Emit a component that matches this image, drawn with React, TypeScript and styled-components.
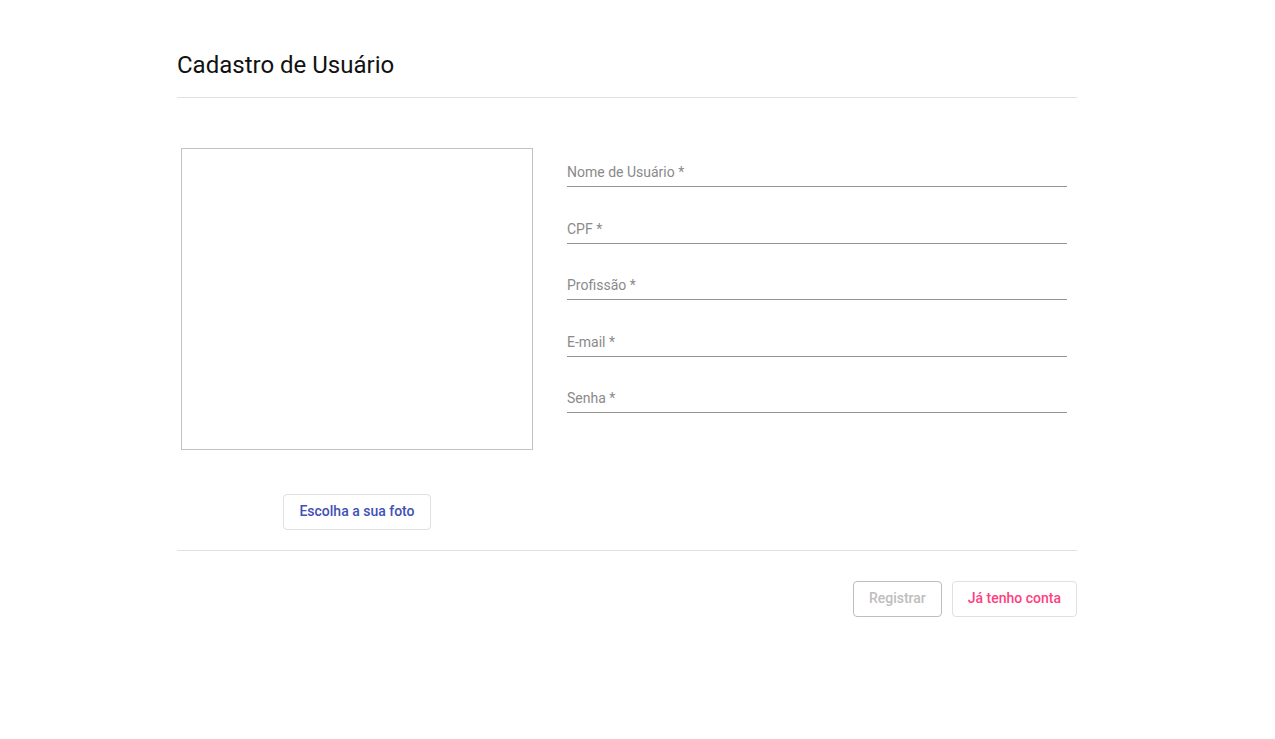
import React from "react";
import styled, { createGlobalStyle } from "styled-components";

const GlobalStyle = createGlobalStyle`
  body {
    margin: 0;
    background: #fff;
    font-family: Roboto, "Noto Sans", sans-serif;
  }
`;

const Page = styled.div`
  padding: 49px 0 0 177px;
`;

const Card = styled.div`
  width: 900px;
`;

const Header = styled.div`
  padding-bottom: 16px;
  border-bottom: 1px solid #e0e0e0;
  h1 {
    margin: 0;
    font-size: 24px;
    line-height: 32px;
    font-weight: 400;
    color: #111;
  }
`;

const Body = styled.div`
  display: flex;
  padding: 50px 0 20px;
  border-bottom: 1px solid #e0e0e0;
`;

const PhotoColumn = styled.div`
  width: 360px;
  display: flex;
  flex-direction: column;
  align-items: center;
  gap: 44px;
`;

const PhotoBox = styled.div`
  width: 350px;
  height: 300px;
  border: 1px solid #c2c2c2;
`;

const FieldsColumn = styled.div`
  margin-left: 30px;
  width: 500px;
  display: flex;
  flex-direction: column;
  gap: 17.5px;
`;

const Field = styled.label`
  display: block;
  padding: 14px 0 4px;
  border-bottom: 1px solid #949494;
  span {
    display: block;
    font-size: 14px;
    line-height: 20px;
    color: #8a8a8a;
  }
`;

const Button = styled.button<{ $tone: "primary" | "accent" | "disabled" }>`
  height: 36px;
  padding: 0 15px 2px;
  background: #fff;
  border-radius: 4px;
  font-family: Roboto, sans-serif;
  font-size: 14px;
  font-weight: 500;
  line-height: 20px;
  cursor: ${(p) => (p.$tone === "disabled" ? "default" : "pointer")};
  border: 1px solid ${(p) => (p.$tone === "disabled" ? "#bdbdbd" : "#e0e0e0")};
  color: ${(p) =>
    p.$tone === "primary" ? "#3f51b5" : p.$tone === "accent" ? "#ff4081" : "#bdbdbd"};
`;

const Actions = styled.div`
  display: flex;
  justify-content: flex-end;
  gap: 10px;
  padding-top: 30px;
`;

const fields = ["Nome de Usuário *", "CPF *", "Profissão *", "E-mail *", "Senha *"];

const App = () => {
  return (
    <>
      <GlobalStyle />
      <Page>
        <Card>
          <Header>
            <h1>Cadastro de Usuário</h1>
          </Header>
          <Body>
            <PhotoColumn>
              <PhotoBox />
              <Button $tone="primary">Escolha a sua foto</Button>
            </PhotoColumn>
            <FieldsColumn>
              {fields.map((label) => (
                <Field key={label}>
                  <span>{label}</span>
                </Field>
              ))}
            </FieldsColumn>
          </Body>
          <Actions>
            <Button $tone="disabled" disabled>
              Registrar
            </Button>
            <Button $tone="accent">Já tenho conta</Button>
          </Actions>
        </Card>
      </Page>
    </>
  );
};

export default App;
